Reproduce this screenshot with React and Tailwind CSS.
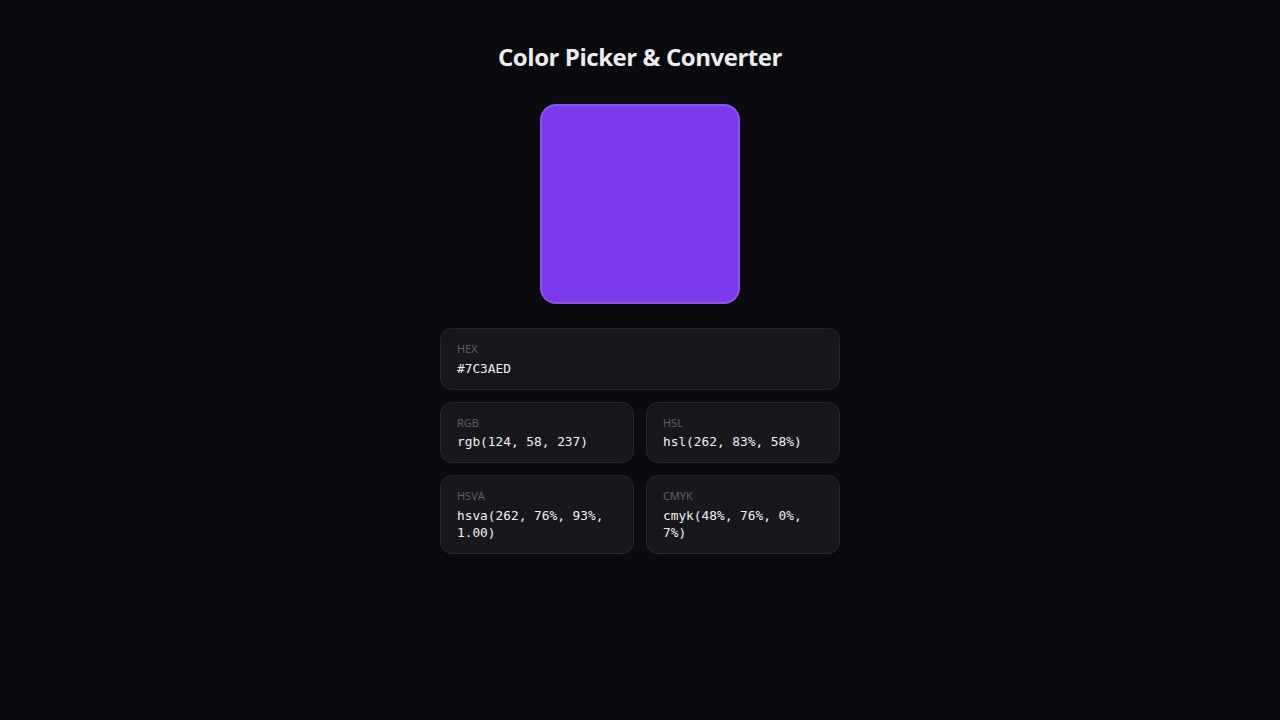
const HEX = '#7C3AED';

const FORMATS = [
    { label: 'RGB', value: 'rgb(124, 58, 237)' },
    { label: 'HSL', value: 'hsl(262, 83%, 58%)' },
    { label: 'HSVA', value: 'hsva(262, 76%, 93%, 1.00)' },
    { label: 'CMYK', value: 'cmyk(48%, 76%, 0%, 7%)' },
];

function ValueCard({ label, value }) {
    return (
        <div className="bg-[#18181c] border border-[#27272c] rounded-xl px-4 py-3">
            <div className="text-[11px] leading-4 mb-[2.5px] text-[#62626b] font-medium">{label}</div>
            <div className="text-[12.8px] leading-[17px] text-[#f0f0f5] font-['DejaVu_Sans_Mono',monospace]">
                {value}
            </div>
        </div>
    );
}

export default function App() {
    return (
        <div className="min-h-screen bg-[#0b0b0f] font-['Open_Sans',sans-serif] flex flex-col items-center pt-[41px]">
            <h1 className="text-2xl leading-8 font-bold text-[#ececf1] tracking-[-0.45px]">Color Picker &amp; Converter</h1>

            <div
                className="mt-[31px] w-[200px] h-[200px] rounded-2xl border-2 border-[#8b55f2]"
                style={{ backgroundColor: HEX }}
            />

            <div className="mt-[24px] w-[400px] flex flex-col gap-3">
                <ValueCard label="HEX" value={HEX} />
                <div className="grid grid-cols-2 gap-3">
                    {FORMATS.map((f) => (
                        <ValueCard key={f.label} label={f.label} value={f.value} />
                    ))}
                </div>
            </div>
        </div>
    );
}
